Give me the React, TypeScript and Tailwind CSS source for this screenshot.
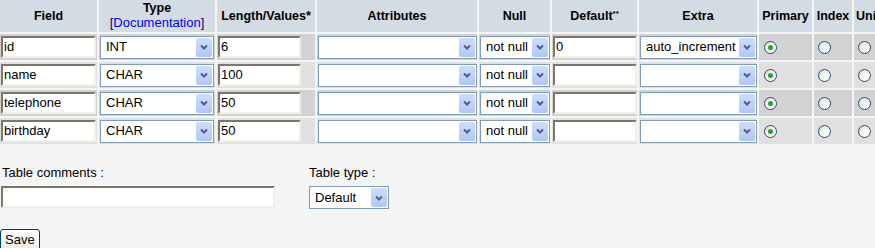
import React from 'react'

interface FieldRow {
  name: string
  type: string
  length: string
  def: string
  extra: string
}

const rows: FieldRow[] = [
  { name: 'id', type: 'INT', length: '6', def: '0', extra: 'auto_increment' },
  { name: 'name', type: 'CHAR', length: '100', def: '', extra: '' },
  { name: 'telephone', type: 'CHAR', length: '50', def: '', extra: '' },
  { name: 'birthday', type: 'CHAR', length: '50', def: '', extra: '' },
]

const headers = ['Field', 'Type', 'Length/Values*', 'Attributes', 'Null', 'Default**', 'Extra', 'Primary', 'Index', 'Unique']

function TextBox({ value, className = '' }: { value: string; className?: string }) {
  return (
    <div
      className={`flex h-[22px] items-center border-2 border-t-[#7b786b] border-l-[#7b786b] border-b-[#f1efe4] border-r-[#f1efe4] bg-white pl-[1px] text-[13px] text-black ${className}`}
    >
      {value}
    </div>
  )
}

function Chevron() {
  return (
    <svg width="8" height="6" viewBox="0 0 8 6">
      <path d="M1 1.5 L4 4.5 L7 1.5" fill="none" stroke="#4d6185" strokeWidth="2" />
    </svg>
  )
}

function Dropdown({ value, className = '' }: { value: string; className?: string }) {
  return (
    <div className={`flex h-[23px] items-center border border-[#7f9db9] bg-white pl-[5px] pr-[1px] text-[13px] text-black ${className}`}>
      <span className="flex-1 truncate">{value}</span>
      <span className="flex h-[19px] w-[16px] items-center justify-center rounded-[2px] bg-gradient-to-b from-[#cfdcfd] to-[#b2c6f6]">
        <Chevron />
      </span>
    </div>
  )
}

function Radio({ checked }: { checked?: boolean }) {
  return (
    <span className="flex h-[13px] w-[13px] items-center justify-center rounded-full border border-[#1c5180] bg-gradient-to-br from-[#d8d8d2] via-[#f6f6f4] to-white">
      {checked && <span className="h-[5px] w-[5px] rounded-full bg-[#22a422]" />}
    </span>
  )
}

export default function App() {
  return (
    <div className="h-[248px] w-[875px] overflow-hidden bg-[#f5f5f5] font-['Liberation_Sans',Arial,sans-serif] text-black">
      {/* field table */}
      <div className="grid w-max grid-cols-[97px_116px_98px_160px_71px_85px_118px_53px_38px_60px] gap-[2px]">
        {headers.map((h) => (
          <div key={h} className="flex h-[32px] flex-col items-center justify-center bg-[#d3dce3] text-[12.5px] font-bold leading-[13px]">
            {h === 'Type' ? (
              <>
                <span>Type</span>
                <span className="font-normal text-[13px] leading-[15px] text-[#000066]">
                  [<span className="text-[#0000ff]">Documentation</span>]
                </span>
              </>
            ) : h === 'Default**' ? (
              <span>
                Default<sup className="text-[8px]">**</sup>
              </span>
            ) : h === 'Unique' ? (
              <span className="self-start pl-[2px]">Unique</span>
            ) : (
              <span>{h}</span>
            )}
          </div>
        ))}

        {rows.map((r, i) => {
          const bg = i % 2 === 0 ? 'bg-[#d2d2d2]' : 'bg-[#e0e0e0]'
          const cell = `flex h-[26px] items-center ${bg}`
          return (
            <React.Fragment key={r.name}>
              <div className={cell}>
                <TextBox value={r.name} className="ml-[1px] w-[95px]" />
              </div>
              <div className={cell}>
                <Dropdown value={r.type} className="ml-[1px] w-[114px]" />
              </div>
              <div className={cell}>
                <TextBox value={r.length} className="ml-[1px] w-[83px]" />
              </div>
              <div className={cell}>
                <Dropdown value="" className="ml-[1px] w-[159px]" />
              </div>
              <div className={cell}>
                <Dropdown value="not null" className="ml-[1px] w-[70px] pl-[4px]" />
              </div>
              <div className={cell}>
                <TextBox value={r.def} className="ml-[1px] w-[84px]" />
              </div>
              <div className={cell}>
                <Dropdown value={r.extra} className="ml-[1px] w-[117px] pl-[4px]" />
              </div>
              <div className={`${cell} pl-[5px]`}>
                <Radio checked />
              </div>
              <div className={`${cell} pl-[4px]`}>
                <Radio />
              </div>
              <div className={`${cell} pl-[4px]`}>
                <Radio />
              </div>
            </React.Fragment>
          )
        })}
      </div>

      {/* table options */}
      <div className="mt-[21px] flex text-[13px]">
        <div className="flex w-[309px] flex-col">
          <span className="pl-[2px] leading-[15px]">Table comments :</span>
          <TextBox value="" className="ml-[1px] mt-[6px] h-[21px] w-[274px]" />
        </div>
        <div className="flex flex-col">
          <span className="leading-[15px]">Table type :</span>
          <Dropdown value="Default" className="mt-[6px] h-[22px] w-[80px] pl-[4px]" />
        </div>
      </div>

      <button className="mt-[20px] h-[22px] rounded-[3px] border border-[#003c74] bg-gradient-to-b from-white to-[#ecebe6] px-[4px] text-[13px] leading-[18px]">
        Save
      </button>
    </div>
  )
}
